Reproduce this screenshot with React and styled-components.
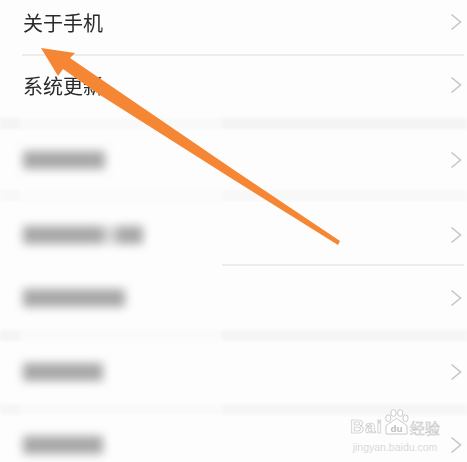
import React from 'react'
import styled, { createGlobalStyle } from 'styled-components'

const rows = [
  { text: '关于手机', height: 55, bottom: 11, line: true },
  { text: '系统更新', height: 63, bottom: 3 },
  { gap: '#f4f4f4', patch: '#f9f9f9' },
  { blur: [82], height: 61 },
  { gap: '#f8f8f8', patch: '#fbfbfb' },
  { blur: [80, 26], height: 64, top: 4, line: true, softLine: true },
  { blur: [102], height: 65 },
  { gap: '#f5f5f5', patch: '#fafafa' },
  { blur: [80], height: 63, bottom: 2 },
  { gap: '#f6f6f6', patch: '#fafafa' },
  { blur: [80], height: 60 },
]

const App = () => {
  return (
    <Page>
      <GlobalStyle />
      {rows.map((row, i) =>
        row.gap ? (
          <Band key={i} $color={row.gap} $patch={row.patch} />
        ) : (
          <Row key={i} $height={row.height} $top={row.top} $bottom={row.bottom}>
            {row.text ? (
              <Label>{row.text}</Label>
            ) : (
              <BlurLabel>
                {row.blur.map((w, j) => (
                  <BlurBit key={j} $width={w} />
                ))}
              </BlurLabel>
            )}
            <Chevron viewBox="0 0 12 18">
              <path d="M1.5 1.5 L10.5 9 L1.5 16.5" />
            </Chevron>
            {row.line && <Line $soft={row.softLine} $bottom={row.bottom} />}
          </Row>
        )
      )}
      <Arrow viewBox="0 0 467 462">
        <polygon points="41,48 75,53 70,58 234,170 340,241 338,245 234,180 100,95 63,69 58,76" />
      </Arrow>
      <Mark>
        <MarkTop>
          <MarkWord>Bai</MarkWord>
          <Paw viewBox="0 0 36 36">
            <path d="M4 23 L18 13 L32 23 L32 34 L4 34 Z" />
            <ellipse cx="7" cy="13" rx="3.5" ry="4.5" />
            <ellipse cx="14" cy="6" rx="3.5" ry="4.5" />
            <ellipse cx="23" cy="6" rx="3.5" ry="4.5" />
            <ellipse cx="30" cy="13" rx="3.5" ry="4.5" />
            <text x="18" y="31" textAnchor="middle">du</text>
          </Paw>
          <MarkCn>经验</MarkCn>
        </MarkTop>
        <MarkUrl>jingyan.baidu.com</MarkUrl>
      </Mark>
    </Page>
  )
}

export default App

const GlobalStyle = createGlobalStyle`
html, body {
  margin: 0;
  padding: 0;
  background: #fdfdfd;
}
`

const Page = styled.div`
position: relative;
width: 467px;
height: 462px;
overflow: hidden;
background: #fdfdfd;
font-family: "Noto Sans CJK SC", "Liberation Sans", sans-serif;
`

const Row = styled.div`
position: relative;
box-sizing: border-box;
height: ${p => p.$height}px;
padding: ${p => p.$top || 0}px 5px ${p => p.$bottom || 0}px 23px;
display: flex;
align-items: center;
justify-content: space-between;
`

const Label = styled.div`
font-size: 20px;
color: #2a2a2a;
filter: blur(0.4px);
`

const BlurLabel = styled.div`
display: flex;
gap: 14px;
background: #d6d6d6;
filter: blur(5px);
`

const BlurBit = styled.div`
width: ${p => p.$width}px;
height: 18px;
background: #a8a8a8;
`

const Chevron = styled.svg`
width: 12px;
height: 18px;
fill: none;
stroke: #c6c6c6;
stroke-width: 1.6;
filter: blur(0.3px);
`

const Line = styled.div`
position: absolute;
left: ${p => (p.$soft ? 222 : 22)}px;
right: 3px;
bottom: -1px;
height: 2px;
background: #ececec;
`

const Band = styled.div`
height: 11px;
filter: blur(1.5px);
background: linear-gradient(
  90deg,
  ${p => p.$color} 0 20px,
  ${p => p.$patch} 20px 222px,
  ${p => p.$color} 222px
);
`

const Arrow = styled.svg`
position: absolute;
left: 0;
top: 0;
width: 467px;
height: 462px;
fill: #f58634;
`

const Mark = styled.div`
position: absolute;
left: 349px;
top: 408px;
width: 92px;
display: flex;
flex-direction: column;
align-items: center;
color: #fff;
`

const MarkTop = styled.div`
display: flex;
align-items: flex-end;
height: 28px;
`

const MarkWord = styled.span`
font: bold 19px/19px "Liberation Sans", sans-serif;
letter-spacing: 1px;
-webkit-text-stroke: 0.6px #bdbdbd;
`

const Paw = styled.svg`
width: 27px;
height: 28px;
fill: #fff;
stroke: #c4c4c4;
stroke-width: 1.2;
text {
  font: bold 13px "Liberation Sans", sans-serif;
  fill: #bdbdbd;
  stroke: none;
}
`

const MarkCn = styled.span`
font: 15px/17px "Noto Sans CJK SC", sans-serif;
-webkit-text-stroke: 0.5px #bdbdbd;
`

const MarkUrl = styled.div`
margin-top: 5px;
font: 10.5px/12px "Liberation Sans", sans-serif;
color: #dadada;
white-space: nowrap;
`
